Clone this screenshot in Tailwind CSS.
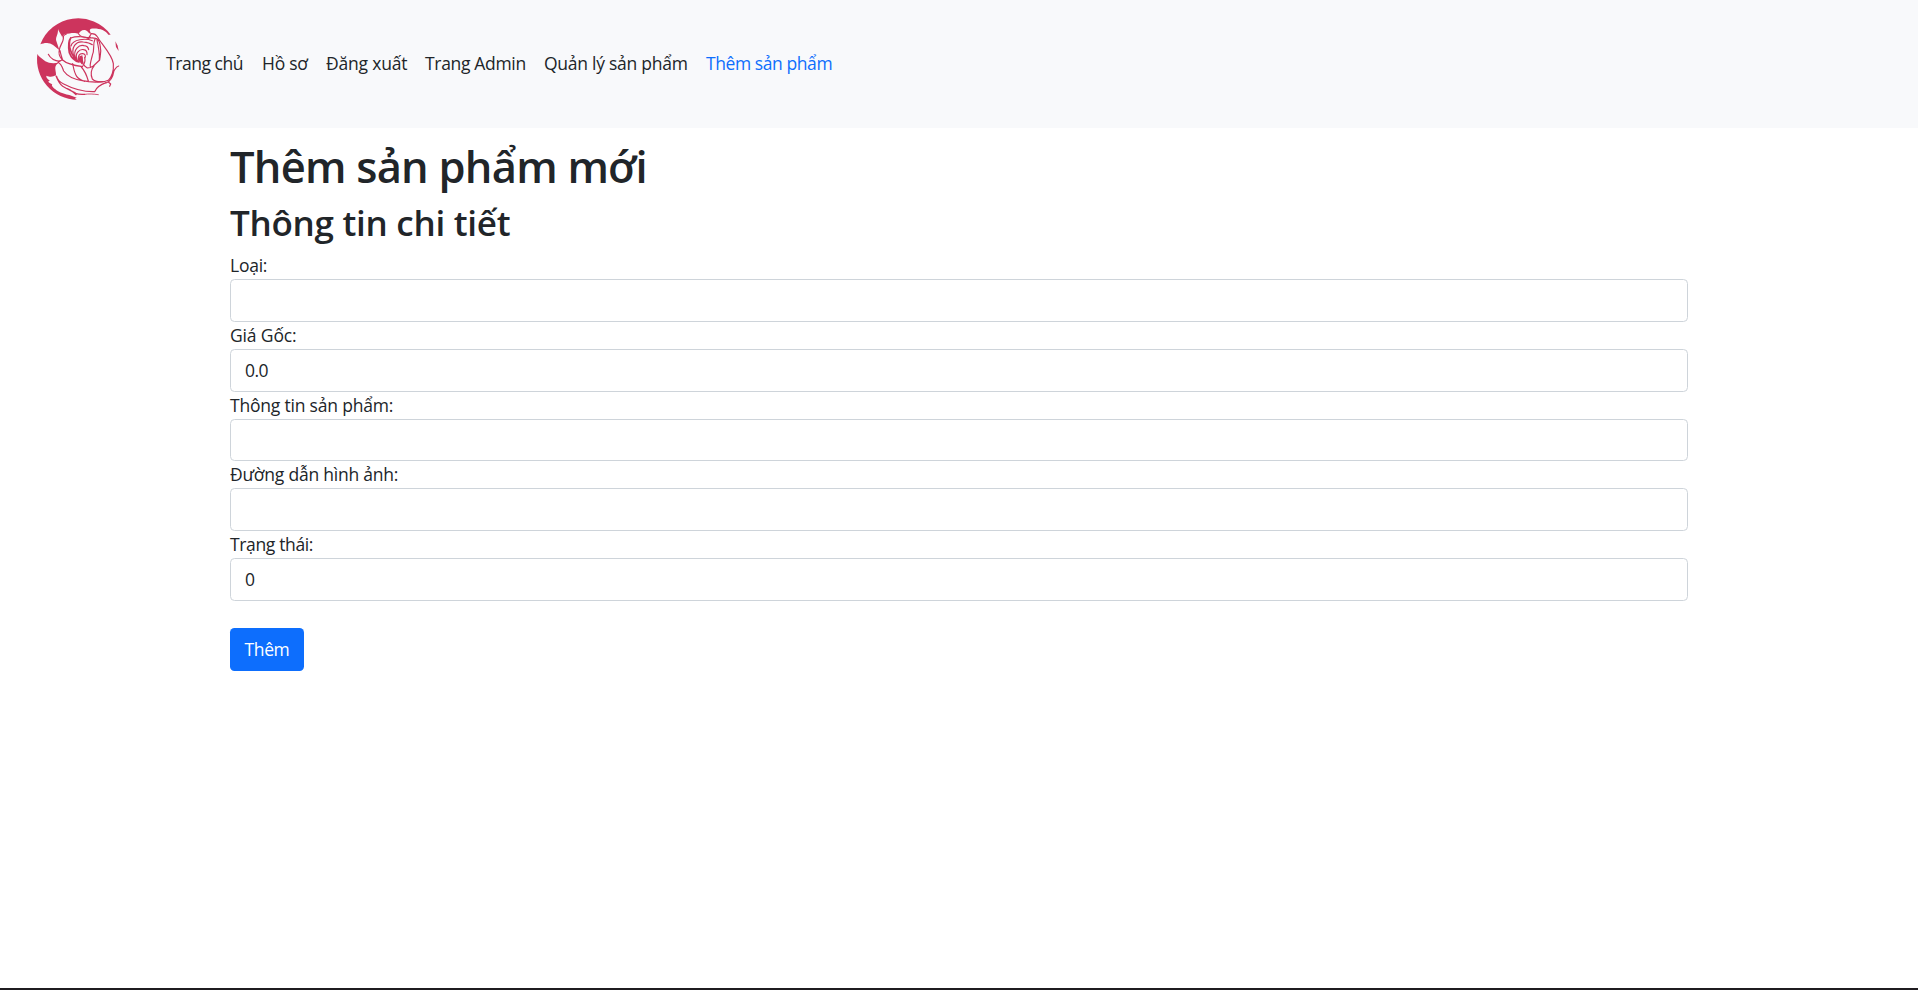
<!DOCTYPE html>
<html lang="vi">
<head>
<meta charset="utf-8">
<title>Thêm sản phẩm mới</title>
<script src="https://cdn.jsdelivr.net/npm/@tailwindcss/browser@4"></script>
</head>
<body class="h-screen flex flex-col overflow-hidden bg-white font-['Open_Sans','Noto_Sans',sans-serif] text-[17.5px] leading-[27px] text-[#212529]">
<nav class="h-32 shrink-0 flex bg-[#f8f9fb] pl-[30px]">
  <svg class="w-[100px] h-[100px] mt-[10px]" viewBox="0 0 300 300" fill="none" stroke="#cd345d" stroke-width="3.5" stroke-linecap="round" stroke-linejoin="round">
    <g fill="#cd345d" stroke="none">
      <path d="M31 103A121.500 121.500 0 0 1 242 74L235 74C226 60 207 54 183 56C176 59 181 65 184 71C174 72 176 64 167 61C158 58 149 64 146 72C135 66 120 70 105 72C94 78 98 84 99 91C97 76 88 69 84 57C85 77 74 82 80 96L88 120C77 114 70 101 55 100C46 98 39 101 31 103Z"/>
      <path d="M22 132C26 139 33 144 46 154C57 160 72 162 88 157L79 164C72 174 79 184 78 196C69 198 65 204 49 197C48 207 60 209 59 213C51 213 57 219 67 223C61 227 75 238 83 243C94 250 108 253 118 255L140 263L134 266L141 269A121.500 121.500 0 0 1 22 132Z"/>
      <path d="M256 94L263 107L266 123L258 111Z"/>
      <path d="M148 139L157 136L160 158L155 162L146 152Z"/>
    </g>
    <path d="M88 120C89 109 96 101 99 91C103 78 95 78 109 72M88 120C85 131 91 143 96 149M90 122C93 137 94 138 98 150C109 161 128 166 158 170M55 133C62 147 76 153 90 154"/>
    <path stroke-width="5" d="M122 84C112 105 123 139 147 156C135 153 124 144 118 128C115 110 116 91 122 84"/>
    <path d="M122 84C139 78 164 79 177 86M123 108C128 87 167 84 187 92M133 142C120 112 139 92 160 96C172 97 180 99 187 104M136 144C128 118 148 103 162 107C171 108 175 113 176 119M141 149C133 129 150 116 161 119C168 120 172 124 171 134M147 153C141 138 149 130 158 131C165 132 168 136 165 144M156 142L156 161M164 142C166 151 164 160 159 166"/>
    <path d="M146 72C154 84 170 83 181 82M184 71C180 78 177 80 178 84M184 71C199 70 201 80 204 83M181 84C204 82 209 91 211 111C215 126 210 139 209 150L190 168C184 172 179 174 172 174C163 168 158 165 158 156M195 87C187 104 195 120 187 136C184 149 179 163 181 170M200 86C205 108 210 131 208 151"/>
    <path d="M204 84C213 99 248 137 250 161C252 182 245 202 235 211C224 216 199 220 187 207C181 194 183 177 192 168M266 168C257 170 256 177 252 182C248 205 239 216 228 219M235 216L242 222L239 229"/>
    <path d="M84 157C96 164 98 176 101 183C111 198 127 207 157 212C179 217 200 217 220 215M98 150C92 151 85 154 84 157M128 161C131 174 132 187 140 199C145 207 155 211 164 214M154 171C162 180 170 195 175 213"/>
    <path d="M80 199C82 210 91 217 101 222C128 236 161 246 194 245C199 233 211 224 228 218M78 198C84 213 89 222 98 229C117 241 133 246 139 251C147 254 156 253 164 253M112 236C124 239 129 247 138 254"/>
    <path stroke-width="2.5" d="M164 253C176 251 190 252 205 254"/>
  </svg>
  <ul class="flex gap-[18px] ml-9 pt-[50px] whitespace-nowrap">
    <li class="w-[78px] tracking-[-0.45px]"><a>Trang chủ</a></li>
    <li class="w-[46px] tracking-[-0.25px]"><a>Hồ sơ</a></li>
    <li class="w-[81px] tracking-[-0.2px]"><a>Đăng xuất</a></li>
    <li class="w-[101px] tracking-[-0.33px]"><a>Trang Admin</a></li>
    <li class="w-[144px] tracking-[-0.26px]"><a>Quản lý sản phẩm</a></li>
    <li class="w-[126px] tracking-[-0.42px] text-[#0d6efd]"><a>Thêm sản phẩm</a></li>
  </ul>
</nav>
<main class="w-[1458px] mx-auto pt-3 grow">
  <h1 class="text-[43.5px] leading-[54px] font-semibold tracking-[-0.77px] mb-[7px]">Thêm sản phẩm mới</h1>
  <h2 class="text-[35px] leading-[43px] font-semibold tracking-[-0.27px] mb-2">Thông tin chi tiết</h2>
  <form>
    <label class="block tracking-[-0.25px]">Loại:</label>
    <input class="block w-full h-[42.75px] border border-[#ced4da] rounded-[4.5px] px-[14px]">
    <label class="block tracking-[-0.15px]">Giá Gốc:</label>
    <input class="block w-full h-[42.75px] border border-[#ced4da] rounded-[4.5px] px-[14px] tracking-[-0.5px]" value="0.0">
    <label class="block tracking-[-0.2px]">Thông tin sản phẩm:</label>
    <input class="block w-full h-[42.75px] border border-[#ced4da] rounded-[4.5px] px-[14px]">
    <label class="block tracking-[-0.22px]">Đường dẫn hình ảnh:</label>
    <input class="block w-full h-[42.75px] border border-[#ced4da] rounded-[4.5px] px-[14px]">
    <label class="block tracking-[-0.36px]">Trạng thái:</label>
    <input class="block w-full h-[42.75px] border border-[#ced4da] rounded-[4.5px] px-[14px]" value="0">
    <button type="button" class="mt-[27px] w-[74px] h-[43px] rounded-[4.5px] bg-[#0d6efd] text-white tracking-[-0.4px]">Thêm</button>
  </form>
</main>
<footer class="h-[2px] shrink-0 bg-[#1f1c20]"></footer>
</body>
</html>
